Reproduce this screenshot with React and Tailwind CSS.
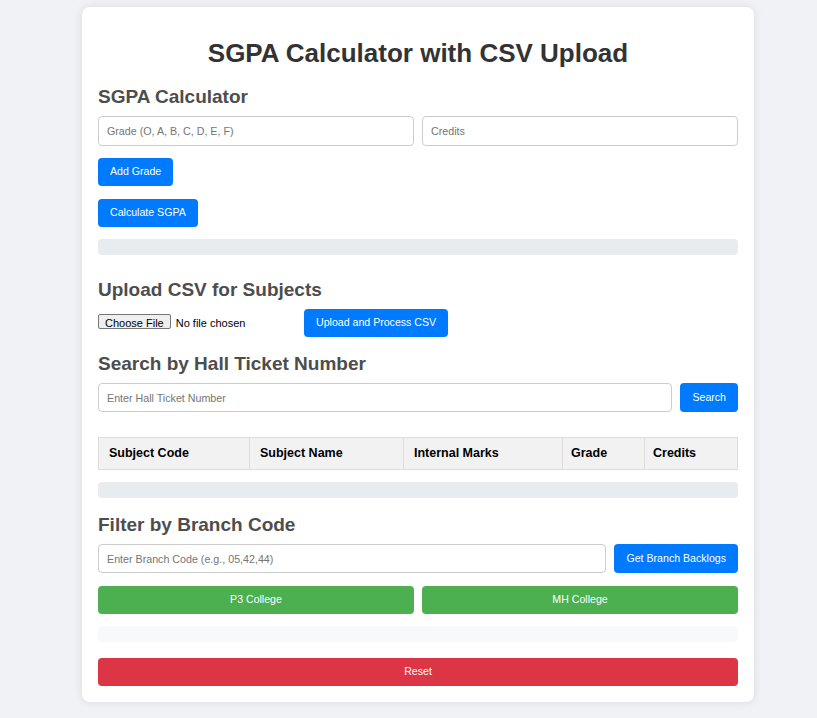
import React from "react";

const font = { fontFamily: '"Liberation Sans", Arial, sans-serif' };

function Btn({ children, className = "" }) {
  return (
    <button
      className={`h-[28px] px-3 rounded-[4px] text-[10.6px] text-white ${className}`}
    >
      {children}
    </button>
  );
}

function Input({ placeholder, className = "" }) {
  return (
    <input
      placeholder={placeholder}
      className={`h-[29px] px-2 border border-[#ccc] rounded-[4px] text-[10.7px] text-[#333] placeholder:text-[#757575] bg-white outline-none ${className}`}
    />
  );
}

export default function App() {
  return (
    <div
      className="min-h-[718px] bg-[#f0f2f5] pt-[7px] pb-4"
      style={font}
    >
      <div className="ml-[82px] w-[672px] bg-white rounded-[8px] shadow-[0_0_10px_rgba(0,0,0,0.1)] px-4 pt-[30px] pb-4">
        <h1 className="text-[26px] leading-[32px] font-bold text-center text-[#333]">
          SGPA Calculator with CSV Upload
        </h1>

        <h2 className="mt-[17px] text-[19px] leading-[22px] font-bold text-[#4d4d4d]">
          SGPA Calculator
        </h2>
        <div className="mt-2 flex gap-2">
          <Input placeholder="Grade (O, A, B, C, D, E, F)" className="flex-1 h-[30px]" />
          <Input placeholder="Credits" className="flex-1 h-[30px]" />
        </div>
        <div className="mt-[12px]">
          <Btn className="bg-[#007bff]">Add Grade</Btn>
        </div>
        <div className="mt-[13px]">
          <Btn className="bg-[#007bff]">Calculate SGPA</Btn>
        </div>
        <div className="mt-[12px] h-[16px] rounded-[4px] bg-[#e9ecef]" />

        <h2 className="mt-[24px] text-[19px] leading-[22px] font-bold text-[#4d4d4d]">
          Upload CSV for Subjects
        </h2>
        <div className="mt-[8px] flex items-center">
          <input
            type="file"
            className="w-[198px] text-[11px] text-black file:mr-[5px] file:px-[6px] file:py-0 file:h-[15px] file:border file:border-[#767676] file:rounded-[2px] file:bg-[#efefef] file:text-[11px] file:text-black"
          />
          <Btn className="ml-2 bg-[#007bff]">Upload and Process CSV</Btn>
        </div>

        <h2 className="mt-[16px] text-[19px] leading-[22px] font-bold text-[#4d4d4d]">
          Search by Hall Ticket Number
        </h2>
        <div className="mt-2 flex gap-2">
          <Input placeholder="Enter Hall Ticket Number" className="flex-1" />
          <Btn className="h-[29px] bg-[#007bff]">Search</Btn>
        </div>

        <table className="mt-[25px] w-full border-collapse text-[12.5px]">
          <thead>
            <tr className="bg-[#f2f2f2] text-black">
              <th className="h-[32px] border border-[#ddd] px-[10px] text-left font-bold w-[151px]">Subject Code</th>
              <th className="border border-[#ddd] px-[10px] text-left font-bold w-[154px]">Subject Name</th>
              <th className="border border-[#ddd] px-[10px] text-left font-bold w-[159px]">Internal Marks</th>
              <th className="border border-[#ddd] px-[8px] text-left font-bold w-[82px]">Grade</th>
              <th className="border border-[#ddd] px-[8px] text-left font-bold">Credits</th>
            </tr>
          </thead>
        </table>
        <div className="mt-[12px] h-[16px] rounded-[4px] bg-[#e9ecef]" />

        <h2 className="mt-[16px] text-[19px] leading-[22px] font-bold text-[#4d4d4d]">
          Filter by Branch Code
        </h2>
        <div className="mt-2 flex gap-2">
          <Input placeholder="Enter Branch Code (e.g., 05,42,44)" className="flex-1" />
          <Btn className="h-[29px] bg-[#007bff]">Get Branch Backlogs</Btn>
        </div>
        <div className="mt-[13px] flex gap-2">
          <Btn className="flex-1 bg-[#4caf50]">P3 College</Btn>
          <Btn className="flex-1 bg-[#4caf50]">MH College</Btn>
        </div>
        <div className="mt-[12px] h-[16px] rounded-[4px] bg-[#f8f9fa]" />
        <Btn className="mt-[16px] w-full bg-[#dc3545]">Reset</Btn>
      </div>
    </div>
  );
}
